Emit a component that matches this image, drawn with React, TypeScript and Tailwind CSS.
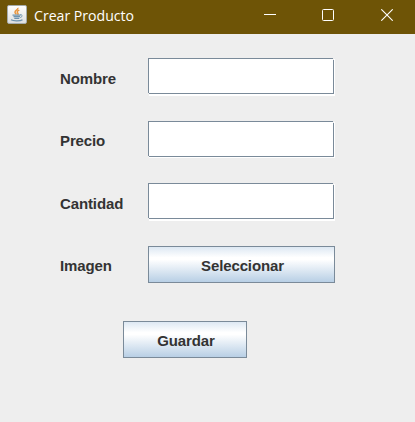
import type { ReactNode } from 'react';

function JavaIcon() {
  return (
    <svg className="ml-[7px] mt-[-5px] h-[19px] w-5" viewBox="0 0 20 20" preserveAspectRatio="none" fill="none">
      <defs>
        <linearGradient id="tile" x1="0" y1="0" x2="0" y2="1">
          <stop offset="0" stopColor="#ffffff" />
          <stop offset="1" stopColor="#dcdedf" />
        </linearGradient>
      </defs>
      <rect x="0.5" y="0.5" width="19" height="19" rx="1.5" fill="url(#tile)" stroke="#a5acae" />
      <path d="M10.8 3c.8 1.8-2.8 2.6-2.8 4.5 0 1 1 1.600 1.400 2.300M12.300 5.400c-2.300 1-2.600 2-1.500 3.200.5.600.2 1.200-.3 1.600" stroke="#e8943c" strokeWidth="1.500" />
      <path d="M5.500 10.700h8M6.500 12.300h6.500M7.300 14h5" stroke="#6f93ae" strokeWidth="1.300" />
      <path d="M13 10.300c2.800-.6 2.800 2.200.2 2.900" stroke="#6f93ae" strokeWidth="1" />
      <path d="M4 15.600c2.500 1.500 9.300 1.400 11.500-.2" stroke="#6b92ae" strokeWidth="1.300" />
    </svg>
  );
}

function TitleBar() {
  return (
    <header className="flex h-[34px] items-center bg-[#6e5406] text-white">
      <JavaIcon />
      <h1 className="ml-[7px] mt-[-4px] w-[100px] whitespace-nowrap font-['Open_Sans','Noto_Sans',sans-serif] text-[15px] leading-5">
        <span className="inline-block origin-left scale-x-[0.94]">Crear Producto</span>
      </h1>
      <div className="ml-auto mr-[22px] mt-[-4px] flex">
        <svg className="mr-[46px] h-3 w-3" viewBox="0 0 12 12" stroke="white" fill="none">
          <path d="M0 5.500h12" />
        </svg>
        <svg className="mr-[47px] h-3 w-3" viewBox="0 0 12 12" stroke="white" fill="none">
          <rect x="0.500" y="0.500" width="11" height="11" rx="1" />
        </svg>
        <svg className="h-3 w-3" viewBox="0 0 12 12" stroke="white" fill="none">
          <path d="M.3.300l11.400 11.400M11.700.300L.300 11.700" strokeWidth="1.100" />
        </svg>
      </div>
    </header>
  );
}

function Row({ label, className, children }: { label: string; className: string; children: ReactNode }) {
  return (
    <div className={`flex h-[37px] ${className}`}>
      <span className="w-[88px] leading-[18px]">{label}</span>
      {children}
    </div>
  );
}

function Field({ label, bevel }: { label: string; bevel: string }) {
  return (
    <div className={`relative w-[187px] shrink-0 self-start border-r border-white ${bevel}`}>
      <input
        aria-label={label}
        className="block h-9 w-[186px] border border-[#7a8a99] bg-white px-1 outline-none"
      />
      <i className="absolute right-0 top-0 h-[2px] w-px bg-[#eeeeee]" />
      <i className="absolute left-0 top-[35px] h-[3px] w-px bg-[#eeeeee]" />
      <i className="absolute -right-px top-0 h-px w-px bg-[#eeeeee]" />
    </div>
  );
}

function MetalButton({ className, children }: { className: string; children: ReactNode }) {
  return (
    <button
      className={`h-[37px] border border-[#7a8a99] bg-[linear-gradient(to_bottom,#dde8f3_0%,#ffffff_30%,#ffffff_36%,#b8cfe5_100%)] pt-[3px] leading-[18px] tracking-[-0.12px] ${className}`}
    >
      {children}
    </button>
  );
}

export default function App() {
  return (
    <div className="flex h-[422px] w-[415px] flex-col overflow-hidden bg-[#eeeeee] font-['Liberation_Sans',Arial,sans-serif] text-[15px] font-bold text-[#333333]">
      <div className="font-normal">
        <TitleBar />
      </div>
      <main className="pl-[60px] pt-6 tracking-[-0.12px]">
        <Row label="Nombre" className="[&>span]:pt-3">
          <Field label="Nombre" bevel="border-b-2" />
        </Row>
        <Row label="Precio" className="mt-[26px] [&>span]:pt-[11px]">
          <Field label="Precio" bevel="border-b" />
        </Row>
        <Row label="Cantidad" className="mt-[25px] [&>span]:pt-3">
          <Field label="Cantidad" bevel="border-b-2" />
        </Row>
        <Row label="Imagen" className="mt-[26px] [&>span]:pt-[11px]">
          <MetalButton className="w-[187px] pl-[2px]">Seleccionar</MetalButton>
        </Row>
        <MetalButton className="ml-[63px] mt-[38px] block w-[124px] pl-[2px]">Guardar</MetalButton>
      </main>
    </div>
  );
}
